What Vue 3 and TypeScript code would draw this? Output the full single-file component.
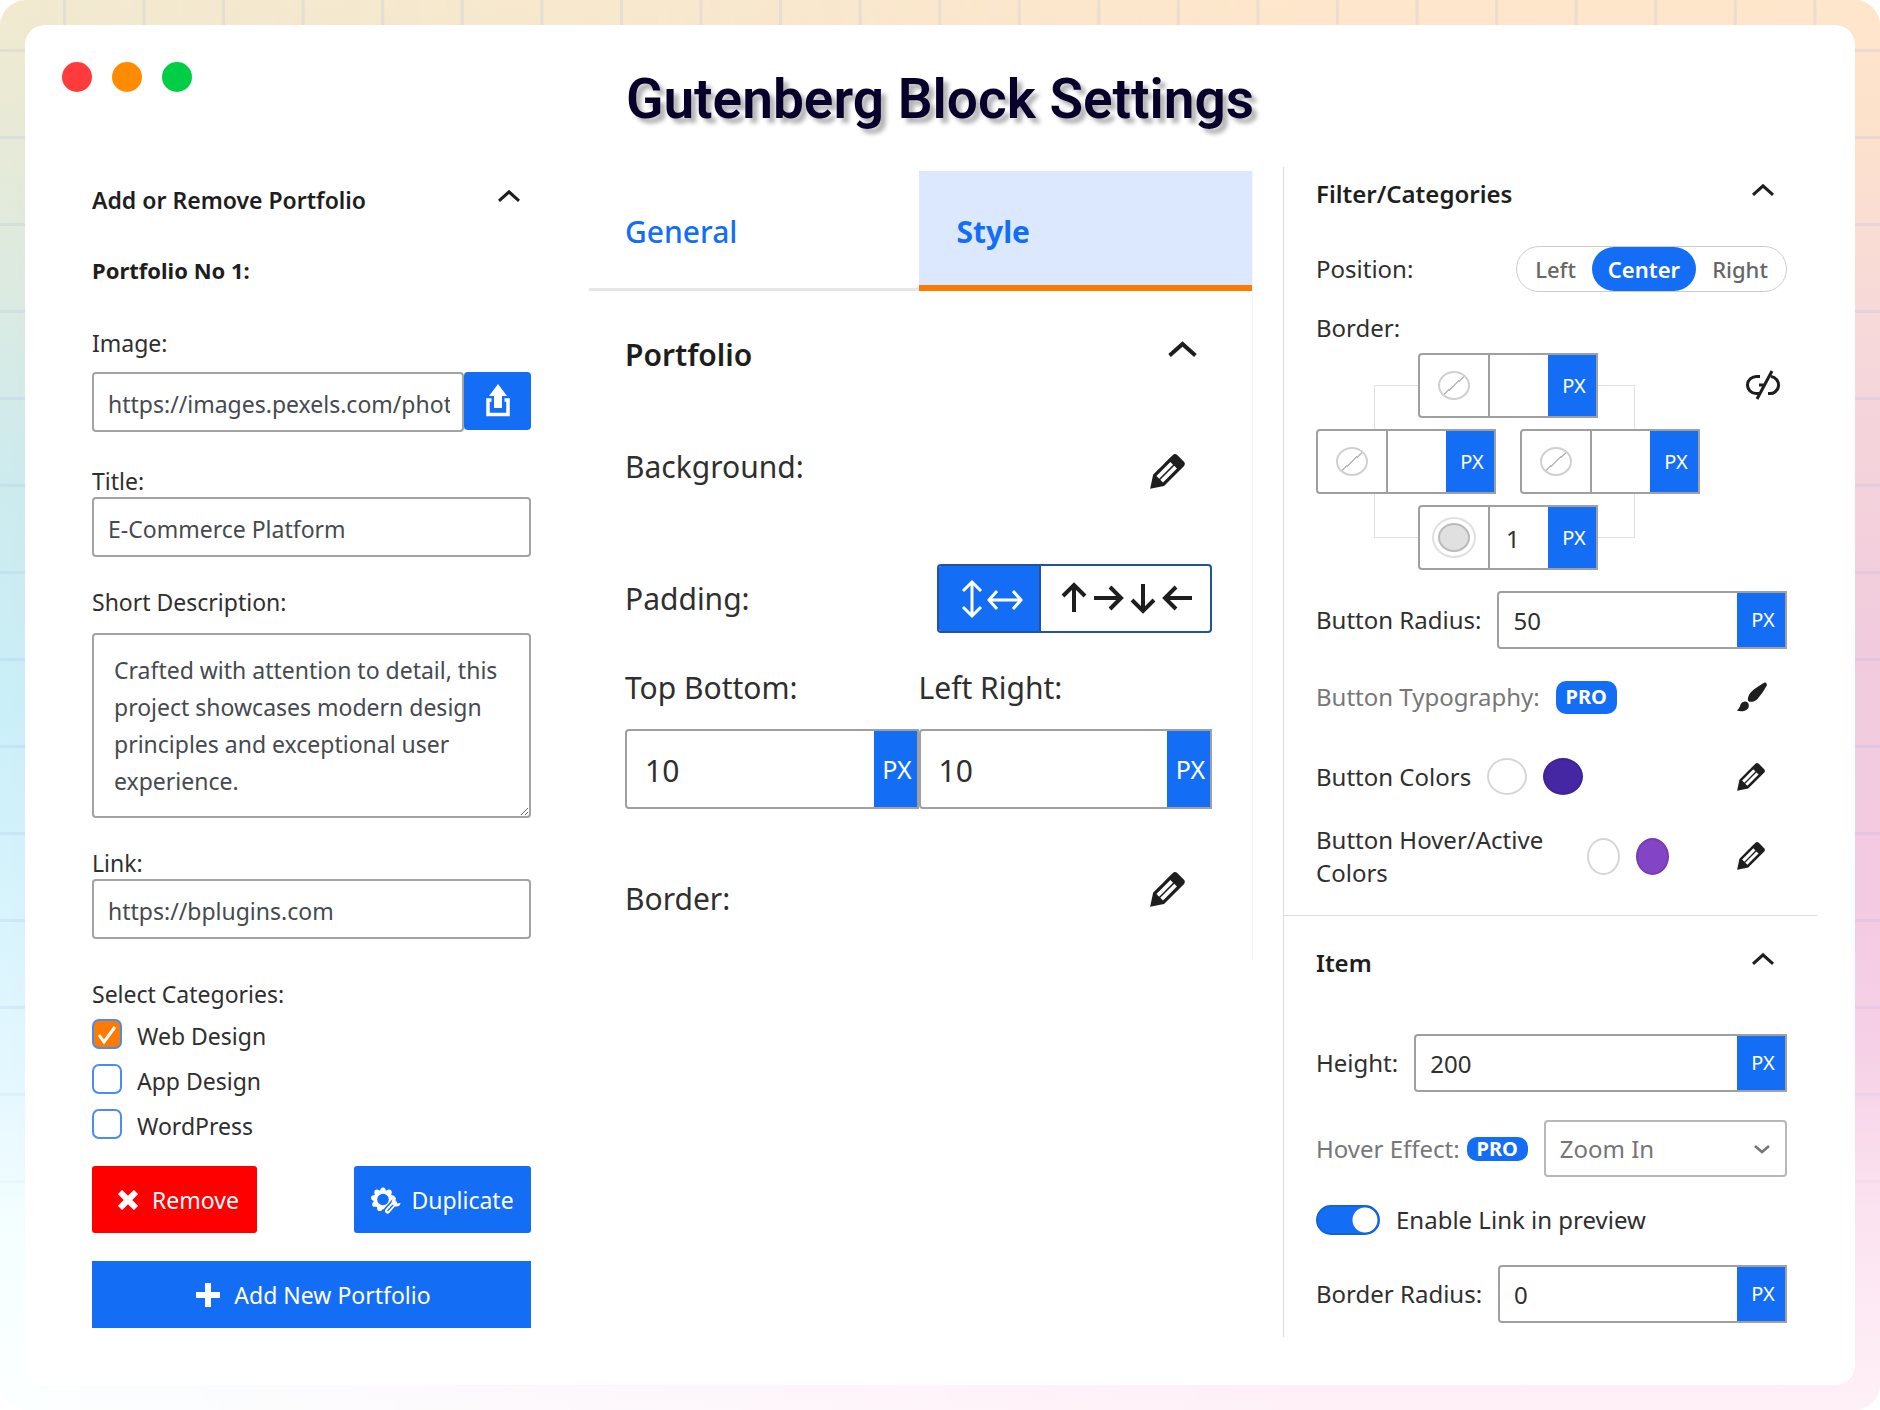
<script setup lang="ts">
import { reactive, ref } from 'vue'

interface Category {
  id: string
  name: string
  checked: boolean
}

const item = reactive({
  image: 'https://images.pexels.com/photos/',
  title: 'E-Commerce Platform',
  description:
    'Crafted with attention to detail, this project showcases modern design principles and exceptional user experience.',
  link: 'https://bplugins.com',
})

const categories = reactive<Category[]>([
  { id: 'web', name: 'Web Design', checked: true },
  { id: 'app', name: 'App Design', checked: false },
  { id: 'wp', name: 'WordPress', checked: false },
])

const tab = ref<'General' | 'Style'>('Style')
const tabs = ['General', 'Style'] as const
const linkedSides = ref(true)
const padding = reactive({ vertical: '10', horizontal: '10' })

const positions = ['Left', 'Center', 'Right'] as const
const position = ref<string>('Center')
const sides = reactive([
  { name: 'top', width: '', filled: false },
  { name: 'left', width: '', filled: false },
  { name: 'right', width: '', filled: false },
  { name: 'bottom', width: '1', filled: true },
])
const buttonRadius = ref('50')
const height = ref('200')
const hoverEffect = ref('Zoom In')
const enableLink = ref(true)
const borderRadius = ref('0')

const teeth = Array.from({ length: 9 }, (_, i) => {
  const angle = (i / 9) * Math.PI * 2 - Math.PI / 2
  return { x: 12 + Math.cos(angle) * 9.5, y: 12.5 + Math.sin(angle) * 9.5 }
})

const chevron = 'M6.5 12.4 12 7.4l5.5 5-1 1.1L12 9.5l-4.5 4z'
const pencil =
  'm13.89 3.39 2.71 2.72c.46.46.42 1.24.03 1.64l-8.01 8.02-5.56 1.16 1.16-5.58s7.6-7.63 7.99-8.03c.39-.39 1.22-.39 1.68.07zm-2.73 2.79-5.59 5.61 1.11 1.11 5.54-5.65zm-2.97 8.23 5.58-5.6-1.07-1.08-5.59 5.6z'
const brush =
  'M18.33 3.57s.27-.8-.31-1.36c-.53-.52-1.22-.24-1.22-.24-.61.3-5.76 3.47-7.67 5.57-.86.96-2.06 3.79-1.09 4.82.92.98 3.96-.17 4.79-1 2.06-2.06 5.21-7.17 5.5-7.79zM1.4 17.65c2.37-1.56 1.46-3.41 3.23-4.64.93-.65 2.22-.62 3.08.29.63.67.8 2.57-.16 3.46-1.57 1.45-4 1.55-6.15.89z'
</script>

<template>
  <div class="frame">
    <main class="window">
      <header class="bar">
        <div class="dots"><i class="red"></i><i class="amber"></i><i class="green"></i></div>
        <h1>Gutenberg Block Settings</h1>
      </header>

      <div class="panels">
        <section class="panel content-panel">
          <div class="head">
            <h2>Add or Remove Portfolio</h2>
            <button class="bare" type="button" aria-label="Collapse">
              <svg class="chev" viewBox="6 7 12 8"><path :d="chevron" /></svg>
            </button>
          </div>
          <h3>Portfolio No 1:</h3>

          <div class="field image-field">
            <label for="image">Image:</label>
            <div class="upload">
              <input id="image" v-model="item.image" class="text" type="text" />
              <button type="button" aria-label="Upload">
                <svg width="26" height="34" viewBox="0 0 26 34">
                  <path d="M13 0 22 12H17v12H9V12H4z" fill="#fff" />
                  <path d="M6.500 16H3v14.500h20V16h-3.500" fill="none" stroke="#fff" stroke-width="3.500" />
                </svg>
              </button>
            </div>
          </div>
          <div class="field title-field">
            <label for="title">Title:</label>
            <input id="title" v-model="item.title" class="text" type="text" />
          </div>
          <div class="field desc-field">
            <label for="desc">Short Description:</label>
            <textarea id="desc" v-model="item.description"></textarea>
          </div>
          <div class="field link-field">
            <label for="link">Link:</label>
            <input id="link" v-model="item.link" class="text" type="text" />
          </div>

          <fieldset class="cats">
            <legend>Select Categories:</legend>
            <label v-for="c in categories" :key="c.id" class="cat">
              <input v-model="c.checked" type="checkbox" />
              <svg v-if="c.checked" class="tick" viewBox="0 0 30 30"><path d="m7 16 5 7L23 8" /></svg>
              <span>{{ c.name }}</span>
            </label>
          </fieldset>

          <div class="actions">
            <button class="action remove" type="button">
              <svg width="20" height="20" viewBox="0 0 20 20"><path d="m2 2 16 16M18 2 2 18" stroke="#fff" stroke-width="6" /></svg>
              Remove
            </button>
            <button class="action duplicate" type="button">
              <svg width="30" height="27" viewBox="0 0 30 27">
                <circle cx="12" cy="12.500" r="7.800" fill="none" stroke="#fff" stroke-width="4" />
                <circle v-for="(t, i) in teeth" :key="i" :cx="t.x" :cy="t.y" r="2.600" fill="#fff" />
                <path d="m16 24 7.500-8.500" stroke="#146ef5" stroke-width="7.500" stroke-linecap="round" />
                <path d="m16.500 24 7-8" stroke="#fff" stroke-width="5" stroke-linecap="round" />
                <path d="M25 10.500a4.500 4.500 0 1 0 4.600 5.500l-3.600.5-1.800-2z" fill="#fff" />
                <path d="m16.500 24 5.500-6" stroke="#146ef5" stroke-width="1.200" />
              </svg>
              Duplicate
            </button>
          </div>
          <button class="action add" type="button">
            <svg width="24" height="24" viewBox="0 0 24 24"><path d="M12 0v24M0 12h24" stroke="#fff" stroke-width="6" /></svg>
            Add New Portfolio
          </button>
        </section>

        <section class="panel style-panel">
          <nav class="tabs">
            <button v-for="t in tabs" :key="t" type="button" :class="{ active: tab === t }" @click="tab = t">{{ t }}</button>
          </nav>
          <div class="style-body">
            <div class="head">
              <h2>Portfolio</h2>
              <button class="bare" type="button" aria-label="Collapse">
                <svg class="chev" viewBox="6 7 12 8"><path :d="chevron" /></svg>
              </button>
            </div>
            <div class="row bg-row">
              <span>Background:</span>
              <button class="bare" type="button" aria-label="Edit background">
                <svg class="pen" viewBox="3 3 14 14"><path :d="pencil" /></svg>
              </button>
            </div>
            <div class="row pad-row">
              <span>Padding:</span>
              <div class="switcher">
                <button type="button" aria-label="Axes" :class="{ on: linkedSides }" @click="linkedSides = true">
                  <svg width="64" height="38" viewBox="0 0 64 38">
                    <path d="M15 3v32M6 11l9-9 9 9M6 27l9 9 9-9M33 20h31M40 11l-8 9 8 9M56 11l8 9-8 9" />
                  </svg>
                </button>
                <button type="button" aria-label="Sides" :class="{ on: !linkedSides }" @click="linkedSides = false">
                  <svg width="134" height="38" viewBox="0 0 134 38">
                    <path class="bold" d="M15 32V6M4 16 15 5l11 11M35 18h26M51 7l11 11-11 11M84 4v26M73 20l11 11 11-11M133 18h-26M117 7l-11 11 11 11" />
                  </svg>
                </button>
              </div>
            </div>
            <div class="pair">
              <div>
                <label for="pv">Top Bottom:</label>
                <div class="unit big"><input id="pv" v-model="padding.vertical" type="text" /><button type="button">PX</button></div>
              </div>
              <div>
                <label for="ph">Left Right:</label>
                <div class="unit big"><input id="ph" v-model="padding.horizontal" type="text" /><button type="button">PX</button></div>
              </div>
            </div>
            <div class="row border-row">
              <span>Border:</span>
              <button class="bare" type="button" aria-label="Edit border">
                <svg class="pen" viewBox="3 3 14 14"><path :d="pencil" /></svg>
              </button>
            </div>
          </div>
        </section>

        <section class="panel filter-panel">
          <div class="group">
            <div class="head">
              <h2>Filter/Categories</h2>
              <button class="bare" type="button" aria-label="Collapse">
                <svg class="chev" viewBox="6 7 12 8"><path :d="chevron" /></svg>
              </button>
            </div>
            <div class="row pos-row">
              <span>Position:</span>
              <div class="pills">
                <button v-for="p in positions" :key="p" type="button" :class="{ on: position === p }" @click="position = p">{{ p }}</button>
              </div>
            </div>
            <p class="border-label">Border:</p>
            <div class="border-row3">
              <div class="sides">
                <div class="wire"></div>
                <div v-for="s in sides" :key="s.name" class="side" :class="s.name">
                  <button class="tone" type="button" :aria-label="s.name + ' border color'">
                    <i :class="{ filled: s.filled }"></i>
                  </button>
                  <input v-model="s.width" type="text" :aria-label="s.name + ' border width'" />
                  <button class="px" type="button">PX</button>
                </div>
              </div>
              <button class="bare unlink" type="button" aria-label="Link sides">
                <svg width="36" height="30" viewBox="0 0 36 30">
                  <path d="M14 6.500h-3a9 8.500 0 0 0-1 17h3M13 15h6M26 1 11 29M25 6.500a8.500 8.500 0 0 1-2 17h-1" fill="none" stroke="#1e1e1e" stroke-width="3" />
                </svg>
              </button>
            </div>
            <div class="row radius-row">
              <label for="brad">Button Radius:</label>
              <div class="unit"><input id="brad" v-model="buttonRadius" type="text" /><button type="button">PX</button></div>
            </div>
            <div class="row typo-row">
              <span class="muted">Button Typography:</span>
              <b class="pro tall">PRO</b>
              <button class="bare end" type="button" aria-label="Typography">
                <svg class="brush" viewBox="1 1 18 18"><path :d="brush" /></svg>
              </button>
            </div>
            <div class="row colors-row">
              <span>Button Colors</span>
              <i class="swatch"></i><i class="swatch indigo"></i>
              <button class="bare end" type="button" aria-label="Edit button colors">
                <svg class="pen" viewBox="3 3 14 14"><path :d="pencil" /></svg>
              </button>
            </div>
            <div class="row hover-row">
              <span>Button Hover/Active Colors</span>
              <i class="swatch slim"></i><i class="swatch slim purple"></i>
              <button class="bare end" type="button" aria-label="Edit hover colors">
                <svg class="pen" viewBox="3 3 14 14"><path :d="pencil" /></svg>
              </button>
            </div>
          </div>

          <div class="group item-group">
            <div class="head">
              <h2>Item</h2>
              <button class="bare" type="button" aria-label="Collapse">
                <svg class="chev" viewBox="6 7 12 8"><path :d="chevron" /></svg>
              </button>
            </div>
            <div class="row height-row">
              <label for="height">Height:</label>
              <div class="unit"><input id="height" v-model="height" type="text" /><button type="button">PX</button></div>
            </div>
            <div class="row effect-row">
              <label class="muted" for="effect">Hover Effect:</label>
              <b class="pro">PRO</b>
              <div class="select">
                <select id="effect" v-model="hoverEffect">
                  <option>Zoom In</option>
                </select>
                <svg viewBox="0 0 18 10"><path d="m2 2 7 6 7-6" fill="none" stroke="#757575" stroke-width="2.500" /></svg>
              </div>
            </div>
            <label class="row toggle-row">
              <input v-model="enableLink" type="checkbox" />
              <span>Enable Link in preview</span>
            </label>
            <div class="row bottom-row">
              <label for="radius">Border Radius:</label>
              <div class="unit"><input id="radius" v-model="borderRadius" type="text" /><button type="button">PX</button></div>
            </div>
          </div>
        </section>
      </div>
    </main>
  </div>
</template>

<style>
body {
  margin: 0;
  background: #fff;
}
</style>

<style scoped>
* {
  box-sizing: border-box;
}
.frame {
  position: relative;
  display: flex;
  min-height: 100vh;
  padding: 25px;
  border-radius: 26px;
  overflow: hidden;
  background: linear-gradient(#f2ead0, #e9ead6 8%, #cdebee 34%, #caeff8 50%, #d9f4fd 66%, #e6f8ff 78%, #f5ffff 88%, #fcffff);
  font-family: 'Noto Sans', 'Open Sans', sans-serif;
  font-size: 23px;
  line-height: 30px;
  color: #2f2f2f;
}
.frame::before,
.frame::after {
  content: '';
  position: absolute;
  inset: 0;
}
.frame::before {
  background: linear-gradient(#fee6cb, #fde2cb 8%, #f6d8da 24%, #f1cbdd 46%, #f4cae2 64%, #f6d0e6 74%, #fbe3f0 86%, #fff0f7);
  mask-image: linear-gradient(to right, transparent, #000 70%);
}
.frame::after {
  background:
    linear-gradient(to right, rgba(150, 170, 230, 0.16) 3px, transparent 3px) 63px 0 / calc((100% - 50px) / 23) 100%,
    linear-gradient(rgba(150, 170, 230, 0.16) 3px, transparent 3px) 0 49px / 100% 87px;
  mask-image: linear-gradient(#000 70%, transparent 90%);
}
.window {
  position: relative;
  z-index: 1;
  flex: 1;
  min-width: 0;
  border-radius: 20px;
  background: #fff;
}
.bar {
  display: grid;
  grid-template-columns: 1fr auto 1fr;
  align-items: start;
  padding: 37px 37px 36px;
}
.dots {
  display: flex;
  gap: 20px;
}
.dots i {
  width: 30px;
  height: 30px;
  border-radius: 50%;
}
.red {
  background: #ff3b3b;
}
.amber {
  background: #ff8c00;
}
.green {
  background: #00cf45;
}
h1 {
  margin: 5px 0 0;
  font: 600 55px/64px Roboto, sans-serif;
  color: #06002b;
  text-shadow: 5px 5px 4px rgba(0, 0, 0, 0.3);
}
h2,
h3 {
  margin: 0;
  font-size: inherit;
  font-weight: 600;
  line-height: inherit;
  color: #1e1e1e;
}
button,
input,
textarea,
select {
  font: inherit;
  color: inherit;
}
button {
  border: 0;
  padding: 0;
  background: none;
  cursor: pointer;
}
svg {
  display: block;
  flex: none;
}
.bare {
  color: #1e1e1e;
}
.bare svg {
  fill: currentColor;
}
.panels {
  display: grid;
  grid-template-columns: 497fr 694fr 534fr;
  align-items: start;
  padding: 0 38px 48px 67px;
}
.panel {
  min-width: 0;
}
.head {
  display: flex;
  justify-content: space-between;
  align-items: flex-start;
}
.chev {
  width: 24px;
  height: 16px;
}

/* Portfolio entry form */
.content-panel {
  padding: 18px 58px 0 0;
}
.content-panel .head {
  padding-right: 10px;
}
.content-panel .chev {
  margin-top: 4px;
}
h3 {
  margin-top: 40px;
  font-size: 22px;
  font-weight: 700;
}
.field {
  display: flex;
  flex-direction: column;
}
.image-field {
  gap: 14px;
  margin-top: 43px;
}
.title-field {
  gap: 1px;
  margin-top: 34px;
}
.desc-field {
  gap: 16px;
  margin-top: 30px;
}
.link-field {
  gap: 1px;
  margin-top: 30px;
}
.text,
textarea {
  display: block;
  width: 100%;
  min-width: 0;
  border: 2px solid #a3a3a3;
  border-radius: 4px;
  background: #fff;
  color: #454a50;
}
.text {
  height: 60px;
  padding: 4px 12px 0 14px;
}
textarea {
  height: 185px;
  padding: 17px 20px 15px;
  line-height: 37px;
  overflow: hidden;
}
.upload {
  display: flex;
  align-items: flex-start;
}
.upload .text {
  flex: 1;
}
.upload button {
  display: grid;
  place-items: center;
  width: 67px;
  height: 58px;
  border-radius: 4px;
  background: #146ef5;
}
.cats {
  display: flex;
  flex-direction: column;
  gap: 10px;
  margin: 40px 0 0;
  padding: 0;
  border: 0;
}
legend {
  padding: 0;
  margin-bottom: 10px;
}
.cat {
  position: relative;
  display: flex;
  align-items: flex-start;
  gap: 15px;
  line-height: 35px;
}
.cat input {
  appearance: none;
  width: 30px;
  height: 30px;
  margin: 0;
  border: 2px solid #4a8cf5;
  border-radius: 7px;
  background: #fff;
}
.cat input:checked {
  background: #ff7a00;
}
.tick {
  position: absolute;
  left: 0;
  top: 0;
  width: 30px;
  height: 30px;
  fill: none;
  stroke: #fff;
  stroke-width: 3;
  pointer-events: none;
}
.actions {
  display: flex;
  justify-content: space-between;
  margin: 22px 0 28px;
}
.action {
  display: flex;
  align-items: center;
  justify-content: center;
  gap: 14px;
  height: 67px;
  padding-top: 1px;
  border-radius: 3px;
  background: #146ef5;
  color: #fff;
}
.duplicate {
  width: 177px;
  gap: 10px;
}
.remove {
  width: 165px;
  padding-left: 8px;
  background: #f00;
}
.add {
  width: 100%;
  padding-left: 4px;
  border-radius: 0;
}

/* Style tab */
.style-panel {
  margin-right: 30px;
  padding: 4px 0 42px;
  border-right: 1px solid #f4f4f4;
  font-size: 30px;
  line-height: 40px;
}
.tabs {
  display: flex;
}
.tabs button {
  flex: 1;
  height: 120px;
  padding: 4px 36px 0;
  border-bottom: 3px solid #e6e6e6;
  font-weight: 500;
  color: #146ef5;
  text-align: left;
}
.tabs .active {
  padding: 8px 38px 0;
  border-bottom: 6px solid #ff7a00;
  background: #dce8fe;
  font-weight: 700;
}
.style-body {
  padding: 44px 40px 0 36px;
}
.style-body .head {
  padding-right: 14px;
}
.style-body .chev {
  width: 31px;
  height: 21px;
  margin-top: 5px;
}
.row {
  display: flex;
  align-items: center;
}
.bg-row,
.pad-row,
.border-row {
  justify-content: space-between;
}
.style-body .pen {
  width: 35px;
  height: 35px;
  margin-right: 27px;
}
.bg-row {
  margin-top: 72px;
  height: 42px;
  align-items: flex-start;
}
.bg-row .bare {
  align-self: flex-end;
}
.pad-row {
  margin-top: 75px;
}
.switcher {
  display: flex;
  width: 275px;
  height: 69px;
  border: 2px solid #21549f;
  border-radius: 4px;
  overflow: hidden;
}
.switcher button {
  display: grid;
  place-items: center;
  flex: 1;
}
.switcher button:first-child {
  flex: none;
  width: 102px;
  border-right: 2px solid #21549f;
}
.switcher path {
  fill: none;
  stroke: #1e1e1e;
  stroke-width: 3;
}
.switcher svg {
  overflow: visible;
}
.switcher .bold {
  stroke-width: 4;
}
.switcher .on {
  background: #146ef5;
}
.switcher .on path {
  stroke: #fff;
}
.pair {
  display: flex;
  margin-top: 35px;
}
.pair > div {
  flex: 1;
  min-width: 0;
}
.unit {
  display: flex;
  flex: 1;
  min-width: 0;
  height: 58px;
  border: 2px solid #a0a0a0;
  border-radius: 4px 0 0 4px;
  background: #fff;
}
.unit input {
  flex: 1;
  width: 0;
  min-width: 0;
  padding: 2px 0 0 14px;
  border: 0;
  background: transparent;
}
.unit button,
.px {
  width: 48px;
  padding-left: 4px;
  background: #146ef5;
  color: #fff;
  font-size: 20px;
}
.big {
  height: 80px;
  margin-top: 21px;
}
.big input {
  padding: 4px 0 0 18px;
}
.big button {
  width: 43px;
  font-size: 25px;
}
.border-row {
  align-items: flex-end;
  height: 47px;
  margin-top: 63px;
}
.border-row .bare {
  align-self: flex-start;
}

/* Filter and item settings */
.filter-panel {
  padding-bottom: 14px;
  border-left: 1px solid #dcdcdc;
  font-size: 24px;
}
.group {
  padding: 12px 30px 0 32px;
}
.filter-panel .head {
  padding-right: 12px;
}
.filter-panel .chev {
  margin-top: 4px;
}
.filter-panel .pen {
  width: 28px;
  height: 28px;
  margin-right: 22px;
}
.end {
  margin-left: auto;
}
.pos-row {
  justify-content: space-between;
  margin-top: 37px;
}
.pills {
  display: flex;
  width: 271px;
  height: 46px;
  padding: 0 2px;
  border: 1px solid #ccc;
  border-radius: 23px;
}
.pills button {
  flex: 1 1 auto;
  border-radius: 22px;
  font-size: 22px;
  font-weight: 500;
  color: #666;
}
.pills .on {
  flex: none;
  width: 104px;
  background: #146ef5;
  color: #fff;
  font-weight: 600;
}
.border-label {
  margin: 21px 0 10px;
}
.border-row3 {
  display: flex;
  justify-content: space-between;
  align-items: flex-start;
}
.sides {
  position: relative;
  display: flex;
  flex-wrap: wrap;
  justify-content: center;
  gap: 11px 24px;
  width: 384px;
}
.wire {
  position: absolute;
  inset: 32px 65px 32px 58px;
  border: 1px solid #e0e0e0;
}
.side {
  position: relative;
  display: flex;
  width: 180px;
  height: 65px;
  border: 2px solid #a0a0a0;
  border-radius: 4px 0 0 4px;
  background: #fff;
}
.side.top,
.side.bottom {
  margin: 0 90px;
}
.side input {
  flex: 1;
  width: 0;
  min-width: 0;
  padding: 2px 0 0 16px;
  border: 0;
  background: transparent;
}
.tone {
  display: grid;
  place-items: center;
  width: 70px;
  border-right: 2px solid #a0a0a0;
}
.tone i {
  width: 32px;
  height: 29px;
  border: 2px solid #d0d0d0;
  border-radius: 50%;
  background: linear-gradient(to bottom right, transparent 48%, #bbb 48% 52%, transparent 52%);
}
.tone .filled {
  border-color: #bbb;
  background: #e0e0e0;
  box-shadow: 0 0 0 4px #fff, 0 0 0 6px #e0e0e0;
}
.unlink {
  margin: 17px 5px 0 0;
}
.radius-row {
  gap: 16px;
  margin-top: 21px;
}
.typo-row {
  gap: 16px;
  margin-top: 31px;
  height: 34px;
}
.muted {
  color: #777;
}
.pro {
  width: 61px;
  border-radius: 10px;
  background: #146ef5;
  color: #fff;
  font-size: 20px;
  font-weight: 700;
  line-height: 24px;
  text-align: center;
}
.tall {
  height: 33px;
  line-height: 31px;
}
.brush {
  width: 34px;
  height: 32px;
  margin-right: 18px;
}
.colors-row {
  gap: 16px;
  margin-top: 44px;
}
.swatch {
  flex: none;
  width: 40px;
  height: 37px;
  border: 2px solid #d6d6d6;
  border-radius: 50%;
  background: #fff;
}
.indigo {
  border-color: #3f2492;
  background: #4527a4;
}
.slim {
  width: 33px;
}
.purple {
  border-color: #783bb3;
  background: #8344c5;
}
.hover-row {
  gap: 16px;
  margin-top: 28px;
  line-height: 33px;
}
.hover-row span {
  width: 255px;
}
.item-group {
  margin-top: 26px;
  padding-top: 32px;
  border-top: 1px solid #dcdcdc;
}
.height-row {
  gap: 16px;
  margin-top: 56px;
}
.effect-row {
  margin-top: 28px;
}
.effect-row .pro {
  margin: 0 16px 0 7px;
}
.select {
  position: relative;
  flex: 1;
  min-width: 0;
}
.select select {
  display: block;
  appearance: none;
  width: 100%;
  height: 57px;
  padding: 0 14px;
  border: 2px solid #b8b8b8;
  border-radius: 4px;
  background: #fff;
  color: #757575;
}
.select svg {
  position: absolute;
  right: 16px;
  top: 24px;
  width: 18px;
  height: 10px;
  pointer-events: none;
}
.toggle-row {
  gap: 16px;
  margin-top: 28px;
}
.toggle-row input {
  appearance: none;
  width: 64px;
  height: 30px;
  margin: 0;
  border: 2px solid #1262dc;
  border-radius: 15px;
  background: radial-gradient(circle at 47px 13px, #fff 12px, #146ef5 13px);
}
.bottom-row {
  gap: 16px;
  margin-top: 30px;
}
</style>
